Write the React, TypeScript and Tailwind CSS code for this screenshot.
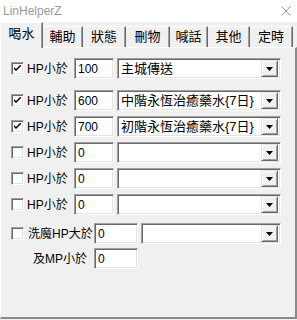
import React from 'react';

const cjk = "font-['Liberation_Sans','Noto_Sans_CJK_TC',sans-serif]";

const sunken =
  'border border-t-[#a0a0a0] border-l-[#a0a0a0] border-r-white border-b-white shadow-[inset_1px_1px_0_#696969,inset_-1px_-1px_0_#e3e3e3] bg-white';

const Checkbox = ({ checked }: { checked?: boolean }) => (
  <div className={`relative h-[13px] w-[13px] shrink-0 ${sunken}`}>
    {checked && (
      <svg className="absolute left-[2px] top-[2px]" width="7" height="7" viewBox="0 0 7 7">
        <path d="M0 2 L0 4 L2 6 L7 1 L7 -1 L2 4 Z" fill="#000" />
      </svg>
    )}
  </div>
);

const NumBox = ({ value, className }: { value: string; className: string }) => (
  <div className={`flex h-[21px] items-center pl-[3px] text-[12px] ${sunken} ${className}`}>{value}</div>
);

const Combo = ({ text, className }: { text?: string; className: string }) => (
  <div className={`flex h-[21px] items-center justify-between p-[2px] ${sunken} ${className}`}>
    <span className={`pl-[1px] text-[13px] leading-none ${cjk}`}>{text}</span>
    <div className="flex h-[17px] w-[17px] items-center justify-center border border-t-[#e3e3e3] border-l-[#e3e3e3] border-r-[#696969] border-b-[#696969] bg-[#f0f0f0] shadow-[inset_1px_1px_0_#fff,inset_-1px_-1px_0_#a0a0a0]">
      <svg width="7" height="4" viewBox="0 0 7 4">
        <path d="M0 0 H7 L3.5 4 Z" fill="#000" />
      </svg>
    </div>
  </div>
);

type RowProps = { checked?: boolean; value: string; option?: string; mt: string };

const HpRow = ({ checked, value, option, mt }: RowProps) => (
  <div className={`flex h-[21px] items-center ${mt}`}>
    <div className="flex w-[73px] items-center pl-[10px]">
      <Checkbox checked={checked} />
      <span className={`ml-[3px] text-[12px] leading-none ${cjk}`}>HP小於</span>
    </div>
    <NumBox value={value} className="w-[40px]" />
    <Combo text={option} className="ml-[3px] w-[164px]" />
  </div>
);

const tabs = [
  { label: '輔助', w: 'w-[40px]' },
  { label: '狀態', w: 'w-[43px]' },
  { label: '刪物', w: 'w-[44px]' },
  { label: '喊話', w: 'w-[38px]' },
  { label: '其他', w: 'w-[42px]' },
  { label: '定時', w: 'w-[43px]' },
];

export default function App() {
  return (
    <div className="h-[320px] w-[297px] overflow-hidden bg-[#f0f0f0] font-['Liberation_Sans',sans-serif] text-black">
      {/* title bar */}
      <div className="flex h-[22px] items-center justify-between bg-white pl-[3px] pr-[6px]">
        <span className="text-[12px] text-[#999]">LinHelperZ</span>
        <svg width="10" height="10" viewBox="0 0 10 10">
          <path d="M0.5 0.5 L9.5 9.5 M9.5 0.5 L0.5 9.5" stroke="#999" strokeWidth="1" />
        </svg>
      </div>

      {/* tab strip */}
      <div className={`relative z-10 flex h-[25px] items-end ${cjk}`}>
        <div className="-mb-[1px] flex h-[26px] w-[43px] items-center justify-center border-t border-l border-white border-r border-r-[#696969] bg-[#f0f0f0] pb-[3px] text-[13px] shadow-[inset_-1px_0_0_#a0a0a0]">
          喝水
        </div>
        {tabs.map((t) => (
          <div
            key={t.label}
            className={`flex h-[21px] items-center justify-center border-t border-white border-r border-r-[#696969] text-[13px] shadow-[inset_-1px_0_0_#a0a0a0] ${t.w}`}
          >
            {t.label}
          </div>
        ))}
      </div>

      {/* panel */}
      <div className="h-[272px] w-[297px] border-t border-l border-white border-r-2 border-b-2 border-r-[#8a8a8a] border-b-[#8a8a8a]">
        <HpRow checked value="100" option="主城傳送" mt="mt-[10px]" />
        <HpRow checked value="600" option="中階永恆治癒藥水{7日}" mt="mt-[11px]" />
        <HpRow checked value="700" option="初階永恆治癒藥水{7日}" mt="mt-[5px]" />
        <HpRow value="0" mt="mt-[5px]" />
        <HpRow value="0" mt="mt-[5px]" />
        <HpRow value="0" mt="mt-[5px]" />

        <div className="mt-[8px] flex h-[21px] items-center">
          <div className="flex w-[93px] items-center pl-[10px]">
            <Checkbox />
            <span className={`ml-[4px] text-[12px] leading-none ${cjk}`}>洗魔HP大於</span>
          </div>
          <NumBox value="0" className="w-[44px]" />
          <Combo className="ml-[3px] w-[140px]" />
        </div>
        <div className="mt-[4px] flex h-[21px] items-center">
          <div className="flex w-[93px] justify-end pr-[7px]">
            <span className={`text-[12px] leading-none ${cjk}`}>及MP小於</span>
          </div>
          <NumBox value="0" className="w-[44px]" />
        </div>
      </div>
    </div>
  );
}
